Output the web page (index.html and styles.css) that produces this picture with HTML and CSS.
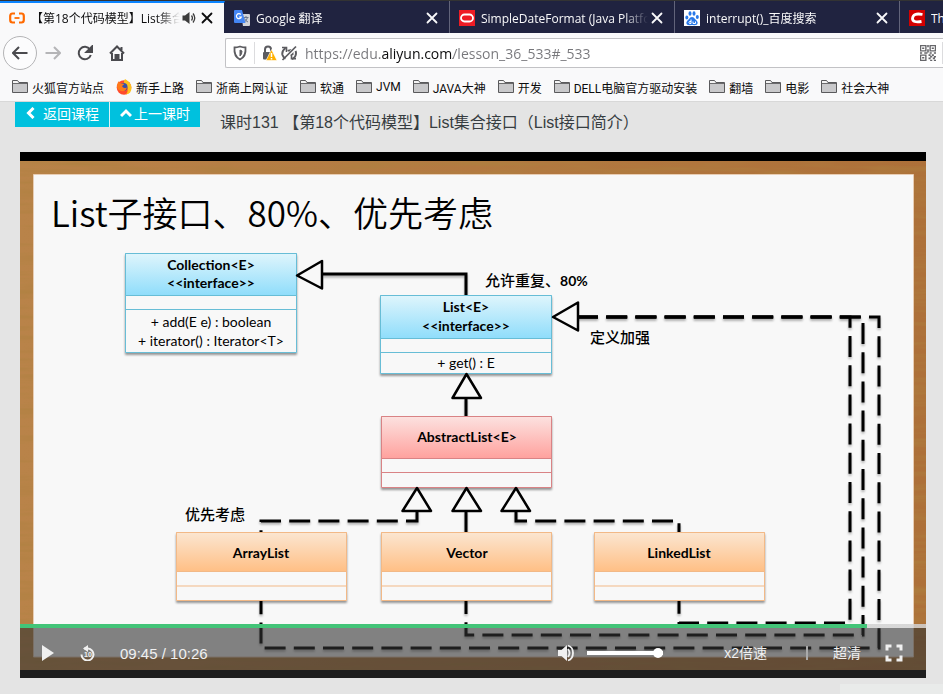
FILE: index.html
```html
<!DOCTYPE html>
<html lang="zh-CN">
<head>
<meta charset="utf-8">
<title>【第18个代码模型】List集合接口</title>
<link rel="stylesheet" href="styles.css">
</head>
<body>
<svg class="defs" aria-hidden="true">
  <symbol id="close" viewBox="0 0 16 16"><path d="M3.500 3.500l9 9M12.500 3.500l-9 9" fill="none" stroke="currentColor" stroke-width="1.800" stroke-linecap="round"/></symbol>
  <symbol id="folder" viewBox="0 0 16 16"><path d="M.5 13.500v-12h5l1.500 2h8.500v10z" fill="#c9c9cb" stroke="#5a5a5c"/><path d="M1 2h4.200l1.500 2.500H1z" fill="#f4f4f4"/><path d="M1 4.500h14" stroke="#6a6a6c"/></symbol>
</svg>

<header class="browser">
  <nav class="tabs" aria-label="标签页">
    <div class="tab tab-active">
      <svg class="icon" viewBox="0 0 16 16" fill="none" stroke="#ff6a00" stroke-width="2.200"><path d="M6 3.500H3.500Q1.200 3.500 1.200 6v4Q1.200 12.500 3.500 12.500H6M10 3.500h2.500Q14.800 3.500 14.800 6v4q0 2.500-2.300 2.500H10"/><path d="M5.500 8h5" stroke-width="1.800"/></svg>
      <a class="tab-title" href="#">【第18个代码模型】List集合接口</a>
      <button class="tab-button" aria-label="静音"><svg class="icon" viewBox="0 0 16 16"><path d="M1.500 5.500H4L8.500 2v12L4 10.500H1.500z" fill="#3c3c3c"/><path d="M10.500 5.500q1.800 2.500 0 5M12 3.500q3.500 4.500 0 9" fill="none" stroke="#3c3c3c" stroke-width="1.300"/></svg></button>
      <button class="tab-button" aria-label="关闭"><svg class="icon"><use href="#close"/></svg></button>
    </div>
    <div class="tab">
      <svg class="icon" viewBox="0 0 16 16"><path d="M7 4h8q1 0 1 1v10q0 1-1 1H9z" fill="#d2d4d8"/><path d="M9.500 7.500h5M12 6v1.500M13.500 7.500q-.8 3-3 4.500M10.500 8.500q1 2.500 3.500 3.500" stroke="#6c7a90" fill="none"/><path d="M1 0h7l3.500 13H1q-1 0-1-1V1q0-1 1-1z" fill="#4486f4"/><path d="M6.800 4.500A2.500 2.500 0 1 0 7.300 7H5" stroke="#fff" stroke-width="1.200" fill="none"/></svg>
      <a class="tab-title" href="#">Google 翻译</a>
      <button class="tab-button" aria-label="关闭"><svg class="icon"><use href="#close"/></svg></button>
    </div>
    <div class="tab">
      <svg class="icon" viewBox="0 0 16 16"><path fill="#ee1c25" d="M0 0h16v16H0z"/><rect x="2" y="4.500" width="12" height="7" rx="3.500" fill="none" stroke="#fff" stroke-width="1.800"/></svg>
      <a class="tab-title" href="#">SimpleDateFormat (Java Platform)</a>
      <button class="tab-button" aria-label="关闭"><svg class="icon"><use href="#close"/></svg></button>
    </div>
    <div class="tab">
      <svg class="icon" viewBox="0 0 16 16"><path fill="#fff" d="M0 0h16v16H0z"/><g fill="#2878e8"><ellipse cx="2.800" cy="7.500" rx="1.500" ry="2.100"/><ellipse cx="6" cy="3.500" rx="1.500" ry="2.200"/><ellipse cx="10" cy="3.500" rx="1.500" ry="2.200"/><ellipse cx="13.300" cy="7" rx="1.500" ry="2.100"/><path d="M8 7q2 0 3 2l2 2q1.500 2 0 3.500-1 1-5 .5-4 .5-5-.5-1.500-1.500 0-3.500l2-2q1-2 3-2z"/></g><path d="M7 9.500v4H5.500q-1-1.200 0-2H7M9 11.500v2h2.500v-2" fill="none" stroke="#fff"/></svg>
      <a class="tab-title" href="#">interrupt()_百度搜索</a>
      <button class="tab-button" aria-label="关闭"><svg class="icon"><use href="#close"/></svg></button>
    </div>
    <div class="tab tab-last">
      <svg class="icon" viewBox="0 0 16 16"><path fill="#d40000" d="M0 0h16v16H0z"/><path d="M13.500 4.500Q4 2.500 3.500 8.500q0 4.500 9 3" fill="none" stroke="#fff" stroke-width="2.800"/></svg>
      <a class="tab-title" href="#">Th</a>
    </div>
  </nav>

  <div class="toolbar">
    <div class="nav-buttons">
      <button class="nav-button back" aria-label="后退"><svg class="icon" viewBox="0 0 16 16"><path d="M15.500 8H1.500M7 2L1 8l6 6" /></svg></button>
      <button class="nav-button forward" aria-label="前进"><svg class="icon" viewBox="0 0 16 16"><path d="M.5 8h14M9 2l6 6-6 6"/></svg></button>
      <button class="nav-button" aria-label="刷新"><svg class="icon" viewBox="0 0 16 16"><path d="M13 4.500A6.200 6.200 0 1 0 13.800 10"/><path d="M15.500 1v6h-6z" fill="#4a4a4e" stroke="none"/></svg></button>
      <button class="nav-button" aria-label="主页"><svg class="icon" viewBox="0 0 16 16"><path d="M1 8.500L8 1.500l7 7M3 8v7h10V8M12.500 2v3"/><path d="M6.500 10h3v5h-3z" fill="#4a4a4e" stroke="none"/></svg></button>
    </div>
    <div class="address">
      <svg class="icon shield" viewBox="0 0 16 16" fill="none" stroke="#5c5c60" stroke-width="1.800"><path d="M8 1.500q3 1 5.500 1 .8 9-5.500 12Q1.700 11.500 2.500 2.500 5 2.500 8 1.500z"/><path d="M8 5v6q2-1.500 2-5z" fill="#5c5c60" stroke-width="1"/></svg>
      <span class="address-rule"></span>
      <svg class="icon" viewBox="0 0 16 16"><path d="M4 7V4.500a3 3 0 0 1 6 0V7" fill="none" stroke="#5c5c60" stroke-width="2"/><rect x="2" y="7" width="10" height="7.500" rx="1" fill="#5c5c60"/><path d="M10.500 4.500L16 15.500H5z" fill="#ffb000" stroke="#fff" stroke-width=".6"/><path d="M10.500 8v4M10.500 13v1.500" stroke="#fff" stroke-width="1.500"/></svg>
      <svg class="icon" viewBox="0 0 16 16" fill="none" stroke="#5c5c60" stroke-width="2"><path d="M4.500 3Q.5 6 1.500 10q.8 2.500 3 3.500M11 14q4-1.500 4-6 0-1-.5-2"/><path d="M1 2.500h4.500V7M15 13.800h-4.500V9.500" stroke-width="1.600"/><path d="M1.500 15L15 1.500" stroke-width="1.700"/><path d="M6 5l2 2 2.500-3zM9 10.500l3.500-3.500v3z" fill="#5c5c60" stroke="none"/></svg>
      <input class="url" type="text" aria-label="网址" value="https://edu.aliyun.com/lesson_36_533#_533">
      <svg class="icon" viewBox="0 0 15 15" fill="none" stroke="#66666a"><path d="M.5.5h5v5h-5zM9.500.5h5v5h-5zM.5 9.500h5v5h-5z" stroke-width="1.300"/><path d="M2 3h2M11 3h2M2 12h2M7.500 0v2M7.500 4v3M0 7.500h2M4 7.500h3M9 7.500h2M13 7.500h2M8 9.500h2M11 9.500h2M9.500 11h2M13 11h2M8 12.500h2M12 12.500h2M9.500 14.500h2M13 14.500h2" stroke-width="1.500"/></svg>
      <span class="address-rule"></span>
    </div>
  </div>

  <nav class="bookmarks" aria-label="书签">
    <a href="#"><svg class="icon"><use href="#folder"/></svg>火狐官方站点</a>
    <a href="#"><svg class="icon" viewBox="0 0 16 16"><circle cx="8" cy="8.500" r="7.300" fill="#ff4a2c"/><path d="M9 0q6.500 3.500 6.500 9T10 15.500Q14 10 9 5q-2-2 0-5z" fill="#ffc21c"/><circle cx="7.500" cy="8" r="4" fill="#3a4fa8"/><path d="M1 7q0-3 2-5 0 2 2 2.500 3-.5 3 1L6 7q1 3 5 1.500Q9 13.500 5 12 1 11 1 7z" fill="#ff7a18"/></svg>新手上路</a>
    <a href="#"><svg class="icon"><use href="#folder"/></svg>浙商上网认证</a>
    <a href="#"><svg class="icon"><use href="#folder"/></svg>软通</a>
    <a href="#"><svg class="icon"><use href="#folder"/></svg>JVM</a>
    <a href="#"><svg class="icon"><use href="#folder"/></svg>JAVA大神</a>
    <a href="#"><svg class="icon"><use href="#folder"/></svg>开发</a>
    <a href="#"><svg class="icon"><use href="#folder"/></svg>DELL电脑官方驱动安装</a>
    <a href="#"><svg class="icon"><use href="#folder"/></svg>翻墙</a>
    <a href="#"><svg class="icon"><use href="#folder"/></svg>电影</a>
    <a href="#"><svg class="icon"><use href="#folder"/></svg>社会大神</a>
  </nav>
</header>

<main class="lesson">
  <div class="lesson-head">
    <div class="lesson-links">
      <a href="#"><svg class="chevron" viewBox="0 0 12 12"><path d="M8.500 1L3.500 6l5 5"/></svg>返回课程</a>
      <a class="previous" href="#"><svg class="chevron" viewBox="0 0 12 12"><path d="M1 9l5-5 5 5"/></svg>上一课时</a>
    </div>
    <h1>课时131 【第18个代码模型】List集合接口（List接口简介）</h1>
  </div>

  <section class="player" aria-label="视频">
    <svg class="slide" viewBox="20 152 906 526" role="img" aria-label="List子接口">
      <defs>
        <linearGradient id="wood" x1="0" x2="1"><stop offset="0" stop-color="#b98349"/><stop offset="1" stop-color="#ad7039"/></linearGradient>
        <linearGradient id="blue" x1="0" x2="0" y1="0" y2="1"><stop offset="0" stop-color="#dff5fc"/><stop offset="1" stop-color="#8fddfb"/></linearGradient>
        <linearGradient id="red" x1="0" x2="0" y1="0" y2="1"><stop offset="0" stop-color="#fce2e0"/><stop offset="1" stop-color="#ffa19d"/></linearGradient>
        <linearGradient id="orange" x1="0" x2="0" y1="0" y2="1"><stop offset="0" stop-color="#fbe6d1"/><stop offset="1" stop-color="#ffbf85"/></linearGradient>
        <filter id="grain" x="0" y="0" width="1" height="1"><feTurbulence type="fractalNoise" baseFrequency=".015 .18" numOctaves="3" seed="4"/><feColorMatrix values="0 0 0 0 .42  0 0 0 0 .22  0 0 0 0 .05  1.500 0 0 0 -.6"/></filter>
        <filter id="shadow" x="-10%" y="-10%" width="120%" height="130%"><feDropShadow dx="0" dy="2" stdDeviation="1" flood-opacity=".4"/></filter>
        <filter id="line-shadow" filterUnits="userSpaceOnUse" x="20" y="152" width="906" height="526"><feDropShadow dx="0" dy="2" stdDeviation="1" flood-opacity=".3"/></filter>
      </defs>
      <path d="M20 152h906v526H20z"/>
      <path d="M20 161h906v509H20z" fill="url(#wood)"/>
      <path d="M20 161h906v509H20z" filter="url(#grain)"/>
      <path d="M33.500 174.500h880v482.500h-880z" fill="#f8f8f8" stroke="#e8cdb4"/>
      <text class="slide-title" x="51" y="227">List子接口、80%、优先考虑</text>

      <g class="lines" filter="url(#line-shadow)">
        <path d="M322 274h144v22M466 398v18M466 511v21"/>
        <g class="dashed">
          <path d="M577 317H850V623H679V601"/>
          <path d="M577 317H863V635H466V601"/>
          <path d="M577 317H879V648H261V601"/>
          <path d="M417 511V521H261V532"/>
          <path d="M516 511V521H679V532"/>
        </g>
      </g>

      <g class="boxes">
        <g class="blue">
          <path class="box" d="M125.500 253.500h171v99h-171z"/><path class="cap" d="M125.500 253.500h171v42h-171z"/><path d="M125.500 309.500h171"/>
          <path class="box" d="M380.500 295.500h171v78h-171z"/><path class="cap" d="M380.500 295.500h171v43h-171z"/><path d="M380.500 352.500h171"/>
        </g>
        <g class="red"><path class="box" d="M381.500 416.500h170v71h-170z"/><path class="cap" d="M381.500 416.500h170v42h-170z"/><path d="M381.500 472.500h170"/></g>
        <g class="orange">
          <path class="box" d="M176.500 532.500h170v68h-170z"/><path class="cap" d="M176.500 532.500h170v39h-170z"/><path d="M176.500 586h170"/>
          <path class="box" d="M381.500 532.500h170v68h-170z"/><path class="cap" d="M381.500 532.500h170v39h-170z"/><path d="M381.500 586h170"/>
          <path class="box" d="M594.500 532.500h170v68h-170z"/><path class="cap" d="M594.500 532.500h170v39h-170z"/><path d="M594.500 586h170"/>
        </g>
      </g>
      <g class="heads">
        <path d="M297 275.500L322 261v27.500z"/><path d="M553 317L578 302.500v28z"/>
        <path d="M466.500 374L481 398h-28.500z"/><path d="M417 488L431 511h-28.500z"/><path d="M466.500 488L481 511h-28.500z"/><path d="M516 488L530 511h-28.500z"/>
      </g>
      <g class="names">
        <text x="211" y="270">Collection&lt;E&gt;</text><text x="211" y="288">&lt;&lt;interface&gt;&gt;</text>
        <text x="466" y="312">List&lt;E&gt;</text><text x="466" y="331">&lt;&lt;interface&gt;&gt;</text>
        <text x="467" y="442">AbstractList&lt;E&gt;</text>
        <text x="261" y="558">ArrayList</text><text x="467" y="558">Vector</text><text x="679" y="558">LinkedList</text>
      </g>
      <g class="members">
        <text x="211" y="327">+ add(E e) : boolean</text><text x="211" y="346">+ iterator() : Iterator&lt;T&gt;</text><text x="466" y="368">+ get() : E</text>
      </g>
      <g class="notes">
        <text x="485" y="286">允许重复、<tspan class="percent">80%</tspan></text><text x="590" y="343">定义加强</text><text x="185" y="520">优先考虑</text>
      </g>
    </svg>

    <div class="controls">
      <input class="progress" type="range" aria-label="播放进度" min="0" max="626" value="585">
      <div class="control-row">
        <button aria-label="播放"><svg class="icon" viewBox="0 0 16 16"><path d="M2 0l12 8L2 16z" fill="currentColor"/></svg></button>
        <button class="replay" aria-label="后退10秒"><svg class="icon" viewBox="0 0 16 16"><path d="M4 3.500h4a6 6 0 1 1-6.500 6" fill="none" stroke="currentColor" stroke-width="2"/><path d="M3 3.500L8 0v7z" fill="currentColor"/><text x="8" y="12" font-size="7" font-weight="700" text-anchor="middle" fill="currentColor">10</text></svg></button>
        <span class="time">09:45 / 10:26</span>
        <button class="mute" aria-label="静音"><svg class="volume-icon" viewBox="0 0 18 18"><path d="M1 6h3.500L10 1v16l-5.500-5H1z" fill="currentColor"/><path d="M11 5q3 4 0 8M11 1.500q5 1.500 5 7.500t-5 7.500" fill="none" stroke="currentColor" stroke-width="1.800"/></svg></button>
        <input class="volume" type="range" aria-label="音量" min="0" max="100" value="100">
        <button class="speed">x2倍速</button>
        <span class="rule"></span>
        <button class="quality">超清</button>
        <button aria-label="全屏"><svg class="volume-icon" viewBox="0 0 18 18"><path d="M2 6.500V2h4.500M11.500 2H16v4.500M16 11.500V16h-4.500M6.500 16H2v-4.500" fill="none" stroke="currentColor" stroke-width="3"/></svg></button>
      </div>
    </div>
  </section>
  <div class="next-panel"></div>
</main>
</body>
</html>
```
FILE: styles.css
```css
* { box-sizing: border-box; }
body {
  margin: 0;
  min-height: 100vh;
  display: flex;
  flex-direction: column;
  overflow: hidden;
  background: #e4e4e4;
  font-family: "Open Sans", "Noto Sans CJK SC", sans-serif;
  font-size: 12px;
  color: #0c0c0d;
}
a { color: inherit; text-decoration: none; }
button {
  display: flex;
  align-items: center;
  justify-content: center;
  padding: 0;
  border: 0;
  background: none;
  color: inherit;
  font: inherit;
}
.defs { display: none; }
.icon { width: 16px; height: 16px; flex: none; display: block; }

/* Browser chrome */
.browser { background: #f9f9fa; border-bottom: 1px solid #d8d8d8; }
.tabs {
  display: flex;
  height: 33px;
  overflow: hidden;
  border-top: 1px solid #333;
  background: #202340;
}
.tab {
  flex: 0 0 225px;
  min-width: 0;
  display: flex;
  align-items: center;
  gap: 6px;
  padding: 2px 9px 0 9px;
  border-right: 1px solid #62647a;
  color: #f9f9fa;
}
.tab-active {
  padding-top: 0;
  border-top: 2px solid #0a84ff;
  border-right-color: #202340;
  background: #f9f9fa;
  color: #0c0c0d;
}
.tab-title {
  flex: 1;
  min-width: 0;
  margin-right: -5px;
  overflow: hidden;
  white-space: nowrap;
  mask-image: linear-gradient(to left, transparent, #000 24px);
}
.tab-last { flex: 1 1 0; padding-right: 0; border-right: 0; }
.tab-last .tab-title { margin-right: 0; mask-image: none; }
.tab-button + .tab-button { margin-left: -4px; }

.toolbar { display: flex; height: 40px; align-items: center; }
.nav-buttons { display: flex; flex: 0 0 225px; align-items: center; padding-left: 3px; }
.nav-button { width: 32px; height: 34px; color: #4a4a4e; }
.nav-button path { fill: none; stroke: currentColor; stroke-width: 2; }
.nav-button path[fill] { fill: currentColor; }
.back { width: 34px; border: 1px solid #b4b4b6; border-radius: 50%; background: #fcfcfd; }
.forward { color: #b5b5b7; }
.address {
  flex: 1;
  display: flex;
  align-items: center;
  height: 30px;
  padding-left: 6px;
  border: 1px solid #c2c2c5;
  border-right: 0;
  border-radius: 2px 0 0 2px;
  background: #fff;
}
.address-rule { width: 1px; height: 22px; margin: 0 6px; background: #dcdcde; }
.address-rule:last-child { margin-right: 0; }
.address .icon + .icon { margin-left: 4px; }
.url {
  flex: 1;
  min-width: 0;
  padding: 0 0 0 8px;
  border: 0;
  outline: 0;
  font: 14px "Open Sans", sans-serif;
  color: transparent;
  background: linear-gradient(to right, #77777b 84px, #0c0c0d 84px, #0c0c0d 156px, #77777b 156px);
  background-clip: text;
}
.bookmarks {
  display: flex;
  align-items: center;
  gap: 12px;
  height: 28px;
  padding-left: 12px;
  font-family: Roboto, "Noto Sans CJK SC", sans-serif;
  white-space: nowrap;
}
.bookmarks a { display: flex; align-items: center; gap: 4px; }

/* Lesson page */
.lesson { flex: 1; display: flex; flex-direction: column; }
.lesson-head {
  display: flex;
  align-items: flex-start;
  gap: 20px;
  height: 50px;
  padding-left: 15px;
  font-family: "Liberation Sans", "Noto Sans CJK SC", sans-serif;
}
.lesson-links { display: flex; gap: 1px; background: #d8f4f8; }
.lesson-links a {
  display: flex;
  align-items: center;
  gap: 6px;
  height: 25px;
  padding: 0 10px 3px;
  background: #00c1de;
  color: #fff;
  font-size: 14px;
}
.lesson-links .previous { gap: 2px; }
.chevron { width: 12px; height: 12px; fill: none; stroke: #fff; stroke-width: 3; }
h1 { margin: 0; padding-top: 9px; color: #373d41; font-size: 16px; font-weight: 400; line-height: 24px; white-space: nowrap; }

.player { position: relative; margin: 0 17px 0 20px; }
.slide { display: block; width: 100%; }
.slide-title { font-family: "Noto Sans CJK SC", sans-serif; font-size: 35px; font-weight: 350; }
.lines { fill: none; stroke: #000; stroke-width: 3; }
.dashed { stroke-dasharray: 21 8.200; }
.heads { fill: #f8f8f8; stroke: #000; stroke-width: 2.500; stroke-linejoin: round; }
.boxes .box { fill: #f8f8f8; filter: url(#shadow); }
.boxes path { fill: none; }
.boxes .blue { stroke: #67bdd6; }
.boxes .red { stroke: #d98385; }
.boxes .orange { stroke: #f2b987; }
.blue .cap { fill: url(#blue); }
.red .cap { fill: url(#red); }
.orange .cap { fill: url(#orange); }
.names, .members { font-family: Lato, sans-serif; font-size: 14px; text-anchor: middle; }
.names { font-weight: 700; }
.notes { font-family: "Noto Sans CJK SC", serif; font-size: 15px; font-weight: 500; }
.percent { font-family: Lato, sans-serif; font-size: 14px; font-weight: 700; }

.controls {
  position: absolute;
  right: 0;
  bottom: 0;
  left: 0;
  color: #f0f0f0;
  font: 14px "Liberation Sans", "Noto Sans CJK SC", sans-serif;
}
input[type="range"] { appearance: none; display: block; margin: 0; }
.progress {
  width: 100%;
  height: 4px;
  background: linear-gradient(to right, #43c478 93.500%, rgba(210, 210, 210, .85) 93.500%);
}
.progress::-webkit-slider-thumb { appearance: none; width: 0; height: 0; }
.control-row {
  display: flex;
  align-items: center;
  height: 50px;
  padding: 0 23px 0 20px;
  background: rgba(50, 50, 50, .6);
}
.replay { margin: 0 24px; }
.time { font-size: 15px; }
.mute { margin-left: auto; }
.volume-icon { display: block; width: 18px; height: 18px; }
.control-row .volume { width: 76px; height: 10px; margin: 0 61px 0 12px; background: linear-gradient(#fff, #fff) center / 100% 4px no-repeat; }
.volume::-webkit-slider-thumb { appearance: none; width: 10px; height: 10px; border-radius: 50%; background: #fff; }
.speed, .quality { padding-bottom: 3px; }
.rule { width: 2px; height: 14px; margin: 0 25px 0 39px; background: #aaa; }
.quality { margin-right: 24px; }
.next-panel { height: 10px; margin: 6px 0 0 840px; background: #e9ebea; }
```
